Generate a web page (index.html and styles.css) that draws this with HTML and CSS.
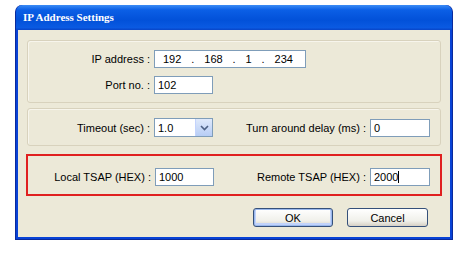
FILE: index.html
```html
<!DOCTYPE html>
<html>
<head>
<title>IP Address Settings</title>
<link rel="stylesheet" href="styles.css">
</head>
<body>

<div class="window">
  <div class="titlebar">IP Address Settings</div>

  <div class="content">
    <div class="group first">
      <div class="row">
        <label>IP address :</label>
        <div class="field ip">
          <span>192</span><span>.</span><span>168</span><span>.</span><span>1</span><span>.</span><span>234</span>
        </div>
      </div>
      <div class="row">
        <label>Port no. :</label>
        <div class="field short">102</div>
      </div>
    </div>

    <div class="group pair">
      <label>Timeout (sec) :</label>
      <div class="field select">
        <span>1.0</span>
        <span class="arrow">
          <svg width="9" height="6" viewBox="0 0 9 6"><path d="M1 1 L4.5 4.5 L8 1" fill="none" stroke="#4d6185" stroke-width="1.6"/></svg>
        </span>
      </div>
      <label>Turn around delay (ms) :</label>
      <div class="field">0</div>
    </div>

    <div class="group pair highlight">
      <label>Local TSAP (HEX) :</label>
      <div class="field">1000</div>
      <label>Remote TSAP (HEX) :</label>
      <div class="field"><span>2000</span><span class="caret"></span></div>
    </div>

    <div class="buttons">
      <button class="default">OK</button>
      <button>Cancel</button>
    </div>
  </div>
</div>

</body>
</html>
```

FILE: styles.css
```css
body {
  margin: 0;
  background-color: #fff;
  font-family: "Liberation Sans", Arial, sans-serif;
  font-size: 11px;
  color: #000;
}

.window {
  width: 438px;
  margin: 5px 0 0 15px;
  border: 1px solid #0a2a9c;
  border-top: none;
  border-radius: 7px 7px 0 0;
  box-sizing: border-box;
  background-color: #0842d6;
  padding: 0 2px 2px 2px;
}

.titlebar {
  height: 25px;
  margin: 0 -2px;
  padding-left: 7px;
  line-height: 25px;
  border-radius: 7px 7px 0 0;
  background: linear-gradient(#3c8cf5, #0b5fe6 20%, #0251d9 60%, #0a5ae2 90%, #0845c8);
  color: #fff;
  font-family: "Liberation Serif", serif;
  font-weight: bold;
  font-size: 11px;
}

.content {
  background-color: #ece9d8;
  padding: 10px 9px 10px 9px;
}

.group {
  border: 1px solid #d8d2bd;
  border-radius: 3px;
  box-shadow: inset 1px 1px 0 #f7f5ec;
  margin-bottom: 5px;
}

.group.first {
  padding: 9px 10px 8px 0;
}

.row {
  display: flex;
  align-items: center;
  gap: 4px;
  margin-bottom: 8px;
}

.row:last-child {
  margin-bottom: 0;
}

.row label {
  width: 122px;
  text-align: right;
}

.field {
  height: 18px;
  box-sizing: border-box;
  border: 1px solid #7f9db9;
  background-color: #fff;
  padding-left: 3px;
  display: flex;
  align-items: center;
}

.field.short {
  width: 59px;
}

.field.ip {
  width: 152px;
  padding: 0 12px 0 8px;
  justify-content: space-between;
}

.pair {
  display: grid;
  grid-template-columns: 122px 59px 1fr 60px;
  column-gap: 4px;
  align-items: center;
  padding: 9px 10px 8px 0;
}

.pair label {
  text-align: right;
}

.select {
  height: 19px;
  padding: 0 0 0 3px;
  justify-content: space-between;
}

.arrow {
  width: 16px;
  height: 17px;
  display: flex;
  align-items: center;
  justify-content: center;
  background: linear-gradient(#dfe9fb, #b7cdf5);
  border-left: 1px solid #c3d3fd;
}

.highlight {
  border: 2px solid #e02020;
  border-radius: 0;
  box-shadow: none;
  margin: 8px -1px 0 -1px;
  padding: 12px 10px 8px 1px;
}

.caret {
  width: 1px;
  height: 12px;
  background-color: #000;
}

.buttons {
  display: flex;
  justify-content: flex-end;
  gap: 14px;
  margin-top: 12px;
  padding-right: 13px;
}

button {
  height: 19px;
  width: 81px;
  font-family: "Liberation Sans", Arial, sans-serif;
  font-size: 11px;
  color: #000;
  border: 1px solid #35507a;
  border-radius: 3px;
  background: linear-gradient(#ffffff, #f0f0ea 70%, #d6d0c5);
  padding: 0;
}

button.default {
  width: 80px;
  box-shadow: inset 0 0 0 1px #9ab8ec, inset 0 -1px 0 2px #c1d3fb;
}
```
